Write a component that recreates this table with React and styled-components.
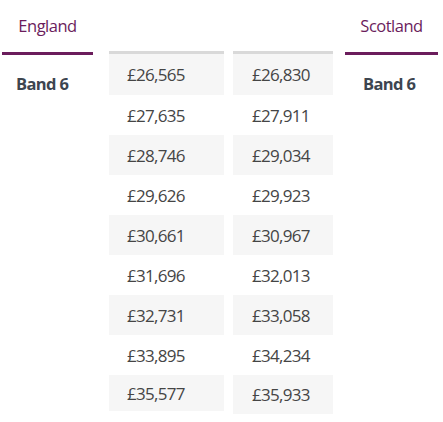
import React from "react";
import styled, { createGlobalStyle } from "styled-components";

const Global = createGlobalStyle`
  html, body { margin: 0; padding: 0; background: #ffffff; }
  body { font-family: "Open Sans", "Noto Sans", sans-serif; }
`;

const Table = styled.div`
  display: flex;
  align-items: flex-start;
  padding-left: 2px;
`;

const RegionColumn = styled.div`
  width: ${(p) => p.$width}px;
  margin-left: ${(p) => p.$offset}px;
  display: flex;
  flex-direction: column;
`;

const RegionHeader = styled.div`
  box-sizing: border-box;
  height: 55px;
  border-bottom: 3px solid #6b1d5c;
  display: flex;
  align-items: center;
  justify-content: center;
  padding-bottom: 1px;
  color: #6b1d5c;
  font-size: 16.5px;
  font-weight: 400;
  letter-spacing: -0.5px;
`;

const BandLabel = styled.div`
  padding: 17px 0 0 ${(p) => p.$indent}px;
  font-size: 16.5px;
  font-weight: 700;
  color: #3d4550;
  letter-spacing: -0.6px;
`;

const PayColumn = styled.div`
  width: ${(p) => p.$width}px;
  margin-left: ${(p) => p.$offset}px;
  margin-top: 51px;
  border-top: 3px solid #d9d9d9;
  display: flex;
  flex-direction: column;
`;

const PayCell = styled.div`
  height: ${(p) => p.$h}px;
  box-sizing: border-box;
  display: flex;
  align-items: center;
  padding-left: ${(p) => p.$pad}px;
  background: ${(p) => (p.$shade ? "#f6f6f6" : "#ffffff")};
  color: #454545;
  font-size: 17px;
  font-weight: 400;
  letter-spacing: -0.7px;
`;

const england = ["£26,565", "£27,635", "£28,746", "£29,626", "£30,661", "£31,696", "£32,731", "£33,895", "£35,577"];
const scotland = ["£26,830", "£27,911", "£29,034", "£29,923", "£30,967", "£32,013", "£33,058", "£34,234", "£35,933"];

function heights(lastH) {
  return england.map((_, i) => (i === 0 ? 41 : i === 8 ? lastH : 40));
}

export default function App() {
  const h1 = heights(36);
  const h2 = heights(39);
  return (
    <>
      <Global />
      <Table>
        <RegionColumn $width={91} $offset={0}>
          <RegionHeader>England</RegionHeader>
          <BandLabel $indent={14}>Band 6</BandLabel>
        </RegionColumn>
        <PayColumn $width={115} $offset={16}>
          {england.map((v, i) => (
            <PayCell key={v} $h={h1[i]} $pad={18} $shade={i % 2 === 0}>{v}</PayCell>
          ))}
        </PayColumn>
        <PayColumn $width={100} $offset={9}>
          {scotland.map((v, i) => (
            <PayCell key={v} $h={h2[i]} $pad={19} $shade={i % 2 === 0}>{v}</PayCell>
          ))}
        </PayColumn>
        <RegionColumn $width={93} $offset={12}>
          <RegionHeader>Scotland</RegionHeader>
          <BandLabel $indent={18}>Band 6</BandLabel>
        </RegionColumn>
      </Table>
    </>
  );
}
